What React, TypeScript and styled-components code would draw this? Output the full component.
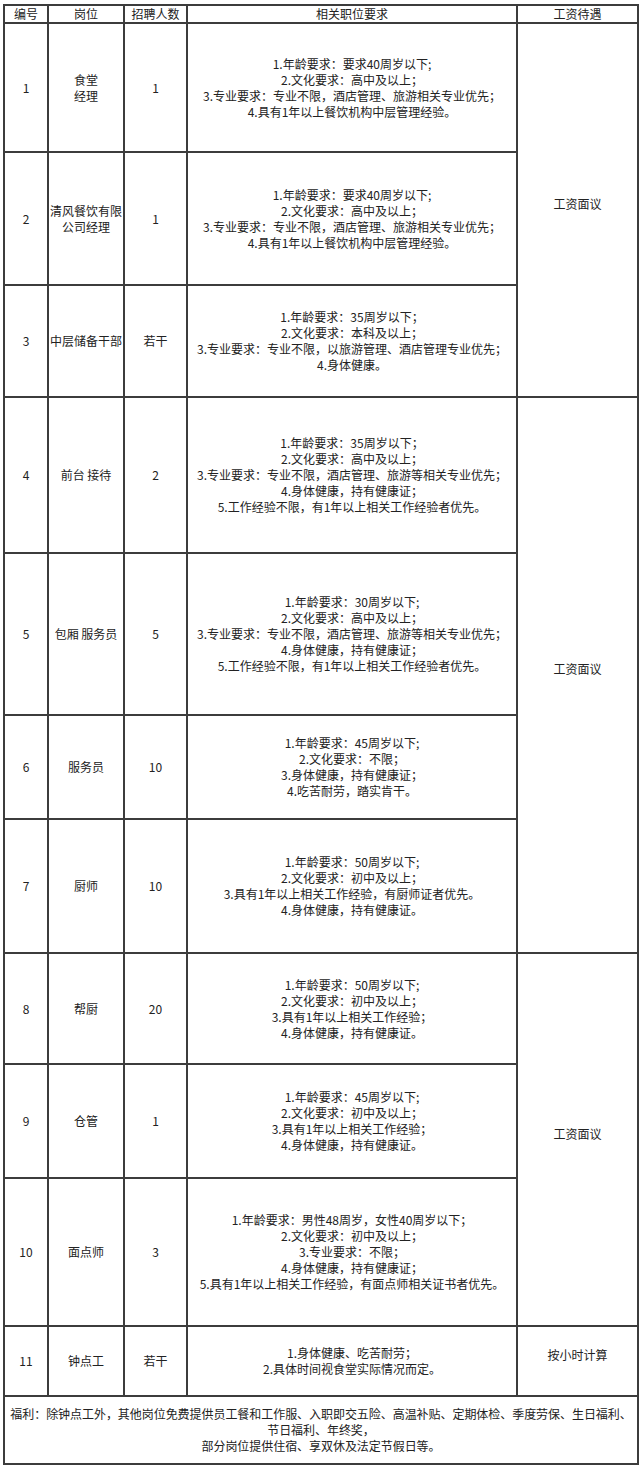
import styled, { createGlobalStyle } from 'styled-components';

const GlobalStyle = createGlobalStyle`
	html, body {
		margin: 0;
		padding: 0;
		background: #fff;
	}
	body {
		font-family: 'Noto Sans CJK SC', 'Noto Sans', sans-serif;
		color: #222;
	}
`;

const Page = styled.div`
	width: 640px;
	padding: 4px 0 0 3px;
	box-sizing: border-box;
`;

const Sheet = styled.table`
	width: 634px;
	border-collapse: collapse;
	table-layout: fixed;
	font-size: 12px;
	line-height: 16px;
`;

const Head = styled.th`
	height: 16px;
	padding: 0;
	border: 2px solid #3c3c3c;
	font-weight: 400;
	text-align: center;
	vertical-align: middle;
	line-height: 14px;
`;

const Cell = styled.td<{ $h?: number }>`
	height: ${(p) => (p.$h ? `${p.$h}px` : 'auto')};
	padding: 0 1px;
	border: 2px solid #3c3c3c;
	text-align: center;
	vertical-align: middle;
	white-space: nowrap;
`;

const Title = styled(Cell)`
	white-space: normal;
	word-break: break-all;
`;

const Salary = styled(Cell)`
	padding-bottom: 12px;
`;

const Welfare = styled.td`
	height: 66px;
	padding: 0;
	border: 2px solid #3c3c3c;
	text-align: center;
	vertical-align: middle;
	white-space: nowrap;
	letter-spacing: -0.05px;
`;

type Job = {
	no: string;
	title: string[];
	count: string;
	reqs: string[];
	h: number;
	salary?: { text: string; span: number };
};

const jobs: Job[] = [
	{
		no: '1',
		title: ['食堂', '经理'],
		count: '1',
		h: 127,
		salary: { text: '工资面议', span: 3 },
		reqs: [
			'1.年龄要求：要求40周岁以下;',
			'2.文化要求：高中及以上；',
			'3.专业要求：专业不限，酒店管理、旅游相关专业优先；',
			'4.具有1年以上餐饮机构中层管理经验。',
		],
	},
	{
		no: '2',
		title: ['清风餐饮有限公司经理'],
		count: '1',
		h: 131,
		reqs: [
			'1.年龄要求：要求40周岁以下;',
			'2.文化要求：高中及以上；',
			'3.专业要求：专业不限，酒店管理、旅游相关专业优先；',
			'4.具有1年以上餐饮机构中层管理经验。',
		],
	},
	{
		no: '3',
		title: ['中层储备干部'],
		count: '若干',
		h: 110,
		reqs: [
			'1.年龄要求：35周岁以下；',
			'2.文化要求：本科及以上；',
			'3.专业要求：专业不限，以旅游管理、酒店管理专业优先；',
			'4.身体健康。',
		],
	},
	{
		no: '4',
		title: ['前台 接待'],
		count: '2',
		h: 154,
		salary: { text: '工资面议', span: 4 },
		reqs: [
			'1.年龄要求：35周岁以下；',
			'2.文化要求：高中及以上；',
			'3.专业要求：专业不限，酒店管理、旅游等相关专业优先；',
			'4.身体健康，持有健康证；',
			'5.工作经验不限，有1年以上相关工作经验者优先。',
		],
	},
	{
		no: '5',
		title: ['包厢 服务员'],
		count: '5',
		h: 160,
		reqs: [
			'1.年龄要求：30周岁以下;',
			'2.文化要求：高中及以上；',
			'3.专业要求：专业不限，酒店管理、旅游等相关专业优先；',
			'4.身体健康，持有健康证；',
			'5.工作经验不限，有1年以上相关工作经验者优先。',
		],
	},
	{
		no: '6',
		title: ['服务员'],
		count: '10',
		h: 102,
		reqs: [
			'1.年龄要求：45周岁以下;',
			'2.文化要求：不限；',
			'3.身体健康，持有健康证；',
			'4.吃苦耐劳，踏实肯干。',
		],
	},
	{
		no: '7',
		title: ['厨师'],
		count: '10',
		h: 132,
		reqs: [
			'1.年龄要求：50周岁以下;',
			'2.文化要求：初中及以上；',
			'3.具有1年以上相关工作经验，有厨师证者优先。',
			'4.身体健康，持有健康证。',
		],
	},
	{
		no: '8',
		title: ['帮厨'],
		count: '20',
		h: 109,
		salary: { text: '工资面议', span: 3 },
		reqs: [
			'1.年龄要求：50周岁以下;',
			'2.文化要求：初中及以上；',
			'3.具有1年以上相关工作经验；',
			'4.身体健康，持有健康证。',
		],
	},
	{
		no: '9',
		title: ['仓管'],
		count: '1',
		h: 112,
		reqs: [
			'1.年龄要求：45周岁以下;',
			'2.文化要求：初中及以上；',
			'3.具有1年以上相关工作经验；',
			'4.身体健康，持有健康证。',
		],
	},
	{
		no: '10',
		title: ['面点师'],
		count: '3',
		h: 146,
		reqs: [
			'1.年龄要求：男性48周岁，女性40周岁以下；',
			'2.文化要求：初中及以上；',
			'3.专业要求：不限；',
			'4.身体健康，持有健康证；',
			'5.具有1年以上相关工作经验，有面点师相关证书者优先。',
		],
	},
	{
		no: '11',
		title: ['钟点工'],
		count: '若干',
		h: 68,
		salary: { text: '按小时计算', span: 1 },
		reqs: ['1.身体健康、吃苦耐劳；', '2.具体时间视食堂实际情况而定。'],
	},
];

function Lines({ items }: { items: string[] }) {
	return (
		<>
			{items.map((line, i) => (
				<div key={i}>{line}</div>
			))}
		</>
	);
}

export default function App() {
	return (
		<Page>
			<GlobalStyle />
			<Sheet>
				<colgroup>
					<col style={{ width: 44 }} />
					<col style={{ width: 76 }} />
					<col style={{ width: 63 }} />
					<col style={{ width: 330 }} />
					<col style={{ width: 121 }} />
				</colgroup>
				<thead>
					<tr>
						<Head>编号</Head>
						<Head>岗位</Head>
						<Head>招聘人数</Head>
						<Head>相关职位要求</Head>
						<Head>工资待遇</Head>
					</tr>
				</thead>
				<tbody>
					{jobs.map((job) => (
						<tr key={job.no}>
							<Cell $h={job.h}>{job.no}</Cell>
							<Title>
								<Lines items={job.title} />
							</Title>
							<Cell>{job.count}</Cell>
							<Cell>
								<Lines items={job.reqs} />
							</Cell>
							{job.salary && (
								<Salary rowSpan={job.salary.span}>{job.salary.text}</Salary>
							)}
						</tr>
					))}
					<tr>
						<Welfare colSpan={5}>
							<div>
								福利：除钟点工外，其他岗位免费提供员工餐和工作服、入职即交五险、高温补贴、定期体检、季度劳保、生日福利、
							</div>
							<div>节日福利、年终奖，</div>
							<div>部分岗位提供住宿、享双休及法定节假日等。</div>
						</Welfare>
					</tr>
				</tbody>
			</Sheet>
		</Page>
	);
}
